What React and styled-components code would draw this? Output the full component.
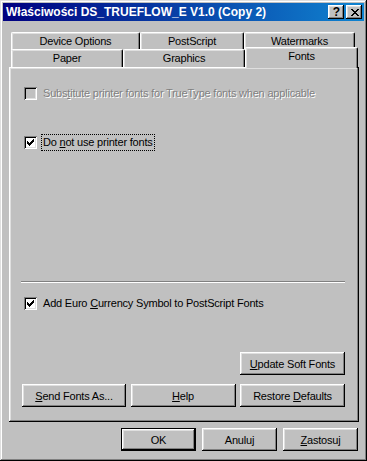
import React from "react";
import styled, { createGlobalStyle } from "styled-components";

const Global = createGlobalStyle`
  html, body { margin: 0; padding: 0; background: #c0c0c0; }
  body { font-family: "Liberation Sans", Arial, sans-serif; }
  * { box-sizing: border-box; }
`;

const Window = styled.div`
  width: 367px;
  height: 461px;
  padding: 3px;
  background: #c0c0c0;
  display: flex;
  flex-direction: column;
  box-shadow: inset -1px -1px #000, inset 1px 1px #dfdfdf,
    inset -2px -2px #808080, inset 2px 2px #fff;
  font-family: "Liberation Sans", Arial, sans-serif;
  font-size: 11px;
  letter-spacing: -0.2px;
  color: #000;
`;

const TitleBar = styled.div`
  height: 18px;
  display: flex;
  align-items: center;
  padding: 0 2px 0 3px;
  background: linear-gradient(to right, #000080, #1084d0);
`;

const TitleText = styled.div`
  flex: 1;
  color: #fff;
  font-weight: bold;
  font-size: 12px;
  letter-spacing: 0;
  white-space: nowrap;
`;

const TitleButtons = styled.div`
  display: flex;
  gap: 2px;
`;

const CaptionButton = styled.div`
  width: 16px;
  height: 14px;
  background: #c0c0c0;
  display: flex;
  align-items: center;
  justify-content: center;
  box-shadow: inset -1px -1px #000, inset 1px 1px #fff,
    inset -2px -2px #808080, inset 2px 2px #dfdfdf;
  font-weight: bold;
  font-size: 12px;
  letter-spacing: 0;
  line-height: 1;
  padding-left: 1px;
`;

const Content = styled.div`
  display: flex;
  flex-direction: column;
  padding: 11px 5px 0 6px;
`;

const TabStrip = styled.div`
  display: flex;
  flex-direction: column;
  padding-left: 2px;
`;

const TabRow = styled.div`
  display: flex;
  height: ${(p) => p.$h}px;
`;

const Tab = styled.div`
  position: relative;
  width: ${(p) => p.$w}px;
  height: ${(p) => (p.$active ? 21 : 18)}px;
  margin-top: ${(p) => (p.$active ? -2 : 0)}px;
  z-index: ${(p) => (p.$active ? 2 : 1)};
  background: #c0c0c0;
  border-top: 1px solid #fff;
  border-left: 1px solid #fff;
  border-right: 1px solid #000;
  border-radius: 2px 2px 0 0;
  box-shadow: inset -1px 0 #808080, inset 1px 1px #dfdfdf;
  display: flex;
  justify-content: center;
  padding-top: 2px;
  white-space: nowrap;
`;

const Panel = styled.div`
  width: 350px;
  height: 355px;
  background: #c0c0c0;
  box-shadow: inset -1px -1px #000, inset 1px 1px #fff,
    inset -2px -2px #808080, inset 2px 2px #dfdfdf;
  display: flex;
  flex-direction: column;
  padding: 20px 14px 0 13px;
`;

const CheckRow = styled.div`
  display: flex;
  align-items: center;
  height: 13px;
  margin-left: 2px;
  margin-top: ${(p) => p.$mt || 0}px;
  gap: 5px;
`;

const Box = styled.div`
  width: 13px;
  height: 13px;
  flex: none;
  background: ${(p) => (p.$disabled ? "#c0c0c0" : "#fff")};
  box-shadow: inset 1px 1px #808080, inset -1px -1px #fff,
    inset 2px 2px #000, inset -2px -2px #dfdfdf;
  display: flex;
  align-items: center;
  justify-content: center;
`;

const Label = styled.span`
  white-space: nowrap;
  padding: 1px 1px 2px 1px;
  color: ${(p) => (p.$disabled ? "#808080" : "#000")};
  text-shadow: ${(p) => (p.$disabled ? "1px 1px 0 #fff" : "none")};
  outline: ${(p) => (p.$focus ? "1px dotted #000" : "none")};
`;

const Separator = styled.div`
  height: 2px;
  margin-top: ${(p) => p.$mt}px;
  border-top: 1px solid #808080;
  border-bottom: 1px solid #fff;
  margin-left: -1px;
`;

const ButtonRow = styled.div`
  display: flex;
  justify-content: ${(p) => p.$justify || "space-between"};
  gap: ${(p) => p.$gap || 0}px;
  margin-top: ${(p) => p.$mt || 0}px;
  padding-right: ${(p) => p.$pr || 0}px;
`;

const Button = styled.div`
  width: ${(p) => p.$w}px;
  height: 23px;
  background: #c0c0c0;
  display: flex;
  align-items: center;
  justify-content: center;
  white-space: nowrap;
  border: ${(p) => (p.$default ? "1px solid #000" : "none")};
  box-shadow: inset -1px -1px #000, inset 1px 1px #fff,
    inset -2px -2px #808080, inset 2px 2px #dfdfdf;
`;

const ButtonText = styled.span`
  white-space: pre;
`;

const Check = () => (
  <svg width="7" height="7" viewBox="0 0 7 7" shapeRendering="crispEdges">
    <path
      d="M6 0h1v1h-1zM5 1h2v1h-2zM0 2h1v1h-1zM4 2h3v1h-3zM0 3h2v1h-2zM3 3h3v1h-3zM0 4h5v1h-5zM1 5h3v1h-3zM2 6h1v1h-1z"
      fill="#000"
    />
  </svg>
);

const CloseGlyph = () => (
  <svg width="8" height="7" viewBox="0 0 8 7" shapeRendering="crispEdges">
    <path
      d="M0 0h2v1h-2zM6 0h2v1h-2zM1 1h2v1h-2zM5 1h2v1h-2zM2 2h4v1h-4zM3 3h2v1h-2zM2 4h4v1h-4zM1 5h2v1h-2zM5 5h2v1h-2zM0 6h2v1h-2zM6 6h2v1h-2z"
      fill="#000"
    />
  </svg>
);

export default function App() {
  return (
    <>
      <Global />
      <Window>
        <TitleBar>
          <TitleText>Właściwości DS_TRUEFLOW_E V1.0 (Copy 2)</TitleText>
          <TitleButtons>
            <CaptionButton>?</CaptionButton>
            <CaptionButton>
              <CloseGlyph />
            </CaptionButton>
          </TitleButtons>
        </TitleBar>
        <Content>
          <TabStrip>
            <TabRow $h={17}>
              <Tab $w={129}>Device Options</Tab>
              <Tab $w={104}>PostScript</Tab>
              <Tab $w={111}>Watermarks</Tab>
            </TabRow>
            <TabRow $h={18}>
              <Tab $w={112}>Paper</Tab>
              <Tab $w={122}>Graphics</Tab>
              <Tab $w={113} $active>
                Fonts
              </Tab>
            </TabRow>
          </TabStrip>
          <Panel>
            <CheckRow>
              <Box $disabled />
              <Label $disabled>
                Subs<u>t</u>itute printer fonts for TrueType fonts when applicable
              </Label>
            </CheckRow>
            <CheckRow $mt={36}>
              <Box>
                <Check />
              </Box>
              <Label $focus>
                Do <u>n</u>ot use printer fonts
              </Label>
            </CheckRow>
            <Separator $mt={132} />
            <CheckRow $mt={14}>
              <Box>
                <Check />
              </Box>
              <Label>
                Add Euro <u>C</u>urrency Symbol to PostScript Fonts
              </Label>
            </CheckRow>
            <ButtonRow $justify="flex-end" $mt={42}>
              <Button $w={105}>
                <ButtonText>
                  <u>U</u>pdate Soft Fonts
                </ButtonText>
              </Button>
            </ButtonRow>
            <ButtonRow $mt={9}>
              <Button $w={104}>
                <ButtonText>
                  <u>S</u>end Fonts As...
                </ButtonText>
              </Button>
              <Button $w={105}>
                <ButtonText>
                  <u>H</u>elp
                </ButtonText>
              </Button>
              <Button $w={105}>
                <ButtonText>
                  Restore <u>D</u>efaults
                </ButtonText>
              </Button>
            </ButtonRow>
          </Panel>
          <ButtonRow $justify="flex-end" $gap={6} $mt={6} $pr={1}>
            <Button $w={75} $default>
              <ButtonText>OK</ButtonText>
            </Button>
            <Button $w={75}>
              <ButtonText>Anuluj</ButtonText>
            </Button>
            <Button $w={75}>
              <ButtonText>
                <u>Z</u>astosuj
              </ButtonText>
            </Button>
          </ButtonRow>
        </Content>
      </Window>
    </>
  );
}
